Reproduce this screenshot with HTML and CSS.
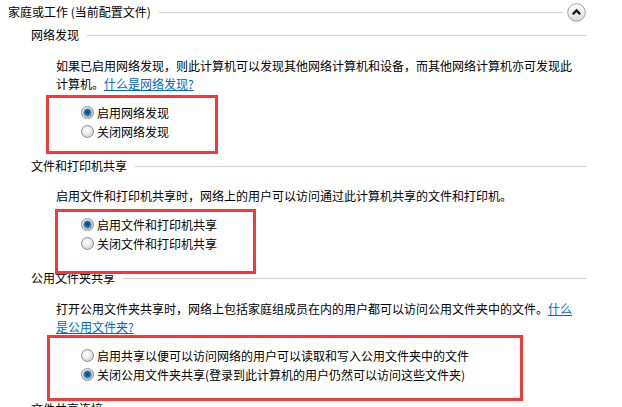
FILE: index.html
```html
<!DOCTYPE html>
<html lang="zh-CN">
<head>
<meta charset="utf-8">
<title>高级共享设置</title>
<link rel="stylesheet" href="styles.css">
</head>
<body>
<div class="page">
  <div class="group-header">
    <span class="group-title">家庭或工作 (当前配置文件)</span>
    <span class="rule"></span>
    <button class="collapse" type="button" aria-label="折叠">
      <svg width="19" height="19" viewBox="0 0 19 19">
        <defs>
          <linearGradient id="btnbg" x1="0" y1="0" x2="0" y2="1">
            <stop offset="0" stop-color="#ffffff"/>
            <stop offset="0.5" stop-color="#f0f0f0"/>
            <stop offset="1" stop-color="#d6d6d6"/>
          </linearGradient>
        </defs>
        <circle cx="9.5" cy="9.5" r="8.8" fill="url(#btnbg)" stroke="#a3a3a3" stroke-width="1"/>
        <path d="M5.8 11.2 L9.5 7.4 L13.2 11.2" fill="none" stroke="#151515" stroke-width="2.3" stroke-linecap="butt" stroke-linejoin="miter"/>
      </svg>
    </button>
  </div>

  <section class="section">
    <div class="section-head"><span class="section-title">网络发现</span><span class="rule"></span></div>
    <p class="desc">如果已启用网络发现，则此计算机可以发现其他网络计算机和设备，而其他网络计算机亦可发现此计算机。<a href="#">什么是网络发现?</a></p>
    <div class="options">
      <label class="option"><span class="radio checked"></span>启用网络发现</label>
      <label class="option"><span class="radio"></span>关闭网络发现</label>
      <span class="mark mark-1"></span>
    </div>
  </section>

  <section class="section">
    <div class="section-head"><span class="section-title">文件和打印机共享</span><span class="rule"></span></div>
    <p class="desc">启用文件和打印机共享时，网络上的用户可以访问通过此计算机共享的文件和打印机。</p>
    <div class="options">
      <label class="option"><span class="radio checked"></span>启用文件和打印机共享</label>
      <label class="option"><span class="radio"></span>关闭文件和打印机共享</label>
      <span class="mark mark-2"></span>
    </div>
  </section>

  <section class="section">
    <div class="section-head"><span class="section-title">公用文件夹共享</span><span class="rule"></span></div>
    <p class="desc">打开公用文件夹共享时，网络上包括家庭组成员在内的用户都可以访问公用文件夹中的文件。<a href="#">什么是公用文件夹?</a></p>
    <div class="options">
      <label class="option"><span class="radio"></span>启用共享以便可以访问网络的用户可以读取和写入公用文件夹中的文件</label>
      <label class="option"><span class="radio checked"></span>关闭公用文件夹共享(登录到此计算机的用户仍然可以访问这些文件夹)</label>
      <span class="mark mark-3"></span>
    </div>
  </section>

  <section class="section">
    <div class="section-head"><span class="section-title">文件共享连接</span><span class="rule"></span></div>
  </section>
</div>
</body>
</html>
```
FILE: styles.css
```css
html, body {
  margin: 0;
  padding: 0;
  background: #ffffff;
}
body {
  font-family: "Noto Sans CJK SC", "Noto Sans", sans-serif;
  font-size: 12px;
  line-height: 18px;
  color: #000000;
  overflow: hidden;
  height: 407px;
}
.page {
  padding: 0 36px 0 8px;
}
.group-header {
  display: flex;
  align-items: center;
  height: 24px;
}
.group-title {
  white-space: nowrap;
}
.rule {
  flex: 1;
  height: 0;
  border-top: 1px solid #cfcfcf;
  margin-left: 8px;
}
.collapse {
  margin: 0 0 0 5px;
  padding: 0;
  border: 0;
  background: none;
  width: 19px;
  height: 19px;
  display: block;
}
.collapse svg {
  display: block;
}
.section {
  padding-left: 23px;
}
.section-head {
  display: flex;
  align-items: center;
  height: 18px;
  margin-top: 2px;
}
.section + .section .section-head {
  margin-top: 16px;
}
.section-title {
  white-space: nowrap;
}
.desc {
  margin: 13px 0 0 25px;
  max-width: 521px;
}
.section:nth-of-type(2) .desc {
  margin-top: 12px;
}
.desc a {
  color: #0066cc;
  text-decoration: underline;
}
.options {
  position: relative;
  margin: 10px 0 0 50px;
}
.option {
  display: flex;
  align-items: center;
  height: 19px;
  white-space: nowrap;
}
.radio {
  position: relative;
  box-sizing: border-box;
  width: 13px;
  height: 13px;
  margin-right: 3px;
  border-radius: 50%;
  border: 1px solid #8c8c8c;
  background: radial-gradient(circle at 40% 35%, #ffffff 0, #f1f1f1 35%, #d2d2d2 75%, #bdbdbd 100%);
  flex: none;
}
.radio.checked::after {
  content: "";
  position: absolute;
  left: 2px;
  top: 2px;
  width: 7px;
  height: 7px;
  border-radius: 50%;
  background: radial-gradient(circle at 50% 45%, #0b3f6e 0, #155c96 35%, #2f90d2 75%, #7cc4ef 100%);
  box-shadow: 0 0 0 0.5px #1d4f78;
}
.mark {
  position: absolute;
  border: 3px solid #f23a3a;
  pointer-events: none;
}
.mark-1 {
  left: -35px;
  top: -8px;
  width: 166px;
  height: 53px;
}
.mark-2 {
  left: -26px;
  top: -6px;
  width: 195px;
  height: 59px;
}
.mark-3 {
  left: -34px;
  top: -11px;
  width: 470px;
  height: 60px;
}
```
